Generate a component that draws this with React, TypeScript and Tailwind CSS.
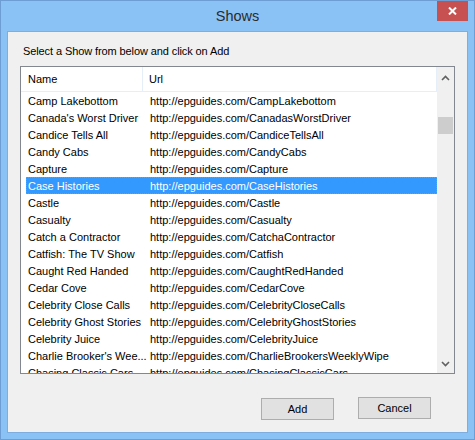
import React from 'react';

const shows: { name: string; url: string }[] = [
  { name: 'Camp Lakebottom', url: 'CampLakebottom' },
  { name: "Canada's Worst Driver", url: 'CanadasWorstDriver' },
  { name: 'Candice Tells All', url: 'CandiceTellsAll' },
  { name: 'Candy Cabs', url: 'CandyCabs' },
  { name: 'Capture', url: 'Capture' },
  { name: 'Case Histories', url: 'CaseHistories' },
  { name: 'Castle', url: 'Castle' },
  { name: 'Casualty', url: 'Casualty' },
  { name: 'Catch a Contractor', url: 'CatchaContractor' },
  { name: 'Catfish: The TV Show', url: 'Catfish' },
  { name: 'Caught Red Handed', url: 'CaughtRedHanded' },
  { name: 'Cedar Cove', url: 'CedarCove' },
  { name: 'Celebrity Close Calls', url: 'CelebrityCloseCalls' },
  { name: 'Celebrity Ghost Stories', url: 'CelebrityGhostStories' },
  { name: 'Celebrity Juice', url: 'CelebrityJuice' },
  { name: "Charlie Brooker's Wee...", url: 'CharlieBrookersWeeklyWipe' },
  { name: 'Chasing Classic Cars', url: 'ChasingClassicCars' },
];

const SELECTED = 'Case Histories';

const Chevron = ({ up }: { up?: boolean }) => (
  <svg width="9" height="6" viewBox="0 0 9 6" className="block">
    <path
      d={up ? 'M1 5 L4.5 1.5 L8 5' : 'M1 1 L4.5 4.5 L8 1'}
      fill="none"
      stroke="#606060"
      strokeWidth="1.6"
    />
  </svg>
);

export default function App() {
  return (
    <div
      className="w-[475px] h-[440px] bg-[#8bc2f5] border border-[#6d9dd3] flex flex-col text-[#000]"
      style={{ fontFamily: '"Liberation Sans", Arial, sans-serif' }}
    >
      {/* title bar */}
      <div className="relative h-[30px] flex items-center justify-center">
        <span className="text-[14.5px] text-[#2b2b2b] leading-none">Shows</span>
        <button className="absolute right-[6px] top-0 w-[31px] h-[20px] bg-[#c75050] flex items-center justify-center">
          <svg width="9" height="8" viewBox="0 0 9 8">
            <path d="M1 0.5 L8 7.5 M8 0.5 L1 7.5" stroke="#fff" strokeWidth="2" />
          </svg>
        </button>
      </div>

      {/* client area */}
      <div className="mx-[6px] h-[402px] bg-[#f0f0f0] border border-[#7eaedf] flex flex-col text-[11px]">
        <div className="pl-[15px] pt-[12px] h-[34px] leading-[14px] tracking-[-0.1px]">
          Select a Show from below and click on Add
        </div>

        <div className="ml-[12px] w-[435px] h-[308px] border border-[#828790] bg-white flex overflow-hidden">
          <div className="flex-1 flex flex-col min-w-0">
            <div className="h-[25px] flex border-b border-[#e5eef9] shrink-0">
              <div className="w-[122px] pl-[7px] pt-[1px] flex items-center border-r border-[#e5eef9]">Name</div>
              <div className="flex-1 pl-[6px] pt-[1px] flex items-center border-r border-[#e5eef9]">Url</div>
            </div>
            <div className="flex flex-col">
              {shows.map((s) => {
                const sel = s.name === SELECTED;
                return (
                  <div
                    key={s.name}
                    className={
                      'ml-[5px] h-[17px] shrink-0 flex items-center whitespace-nowrap pt-[1px] ' +
                      (sel
                        ? 'bg-[#3399ff] text-white outline outline-1 outline-dotted outline-[#c98a3e] -outline-offset-1'
                        : '')
                    }
                  >
                    <div className="w-[124px] pl-[2px] overflow-hidden">{s.name}</div>
                    <div>http://epguides.com/{s.url}</div>
                  </div>
                );
              })}
            </div>
          </div>
          {/* scrollbar */}
          <div className="w-[17px] bg-[#f0f0f0] flex flex-col items-center shrink-0">
            <div className="h-[17px] w-full flex items-center justify-center mt-[2px]">
              <Chevron up />
            </div>
            <div className="h-[31px]" />
            <div className="w-[15px] h-[17px] bg-[#cdcdcd]" />
            <div className="flex-1" />
            <div className="h-[17px] w-full flex items-center justify-center mb-[1px]">
              <Chevron />
            </div>
          </div>
        </div>

        <div className="flex pl-[253px] pt-[23px] gap-[24px] items-start">
          <button className="mt-[1px] w-[73px] h-[22px] bg-[#e1e1e1] border border-[#adadad] flex items-center justify-center">
            Add
          </button>
          <button className="w-[73px] h-[22px] bg-[#e1e1e1] border border-[#adadad] flex items-center justify-center">
            Cancel
          </button>
        </div>
      </div>
    </div>
  );
}
